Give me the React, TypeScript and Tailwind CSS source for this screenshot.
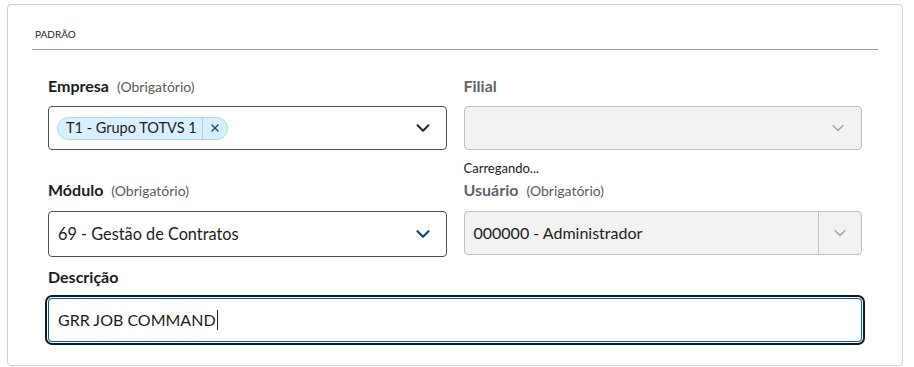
import { ChevronDown, X } from "lucide-react";

const font = { fontFamily: "Lato, 'Noto Sans', sans-serif" };

function Label({
  text,
  required,
  disabled,
}: {
  text: string;
  required?: boolean;
  disabled?: boolean;
}) {
  return (
    <div className="flex h-[20px] items-center gap-[8px]">
      <span
        className={`text-[16px] font-bold ${disabled ? "text-[#5f646a]" : "text-[#1c1c1c]"}`}
      >
        {text}
      </span>
      {required && (
        <span className="pt-[1px] text-[14px] text-[#5c5c5c]">(Obrigatório)</span>
      )}
    </div>
  );
}

export default function App() {
  return (
    <div className="min-h-[367px] bg-white pl-[7px] pt-[4px]" style={font}>
      <div className="h-[362px] w-[896px] rounded-[4px] border border-[#d0d0d0] px-[24px]">
        <div className="flex h-[45px] items-end border-b border-[#9c9c9c] pb-[7px] pl-[3px]">
          <span className="text-[10px] uppercase text-[#1c1c1c]">Padrão</span>
        </div>

        <div className="px-[16px] pt-[26px]">
          <div className="grid grid-cols-2 gap-x-[17px]">
            <div className="flex flex-col">
              <Label text="Empresa" required />
              <div className="mt-[10px] flex h-[44px] items-center rounded-[4px] border border-[#4a4f53] pl-[8px] pr-[12px]">
                <span className="flex h-[23px] items-center rounded-full border border-[#a8d5f3] bg-[#d8effc] text-[14.5px] text-[#1c1c1c]">
                  <span className="pl-[8px] pr-[5px]">T1 - Grupo TOTVS 1</span>
                  <span className="flex h-full items-center border-l border-[#a8d5f3] px-[6px] text-[#0c4f7a]">
                    <X size={12} strokeWidth={2.5} />
                  </span>
                </span>
                <ChevronDown
                  className="ml-auto text-[#1d2a33]"
                  size={22}
                  strokeWidth={2.2}
                />
              </div>

              <div className="mt-[30px]">
                <Label text="Módulo" required />
              </div>
              <div className="mt-[11px] flex h-[46px] items-center rounded-[4px] border border-[#4a4f53] pl-[9px] pr-[12px]">
                <span className="text-[16.3px] text-[#1c1c1c]">
                  69 - Gestão de Contratos
                </span>
                <ChevronDown
                  className="ml-auto text-[#0c4a6e]"
                  size={22}
                  strokeWidth={2.4}
                />
              </div>
            </div>

            <div className="flex flex-col">
              <Label text="Filial" disabled />
              <div className="mt-[10px] flex h-[44px] items-center justify-end rounded-[4px] border border-[#c2c2c2] bg-[#f2f2f2] pr-[13px]">
                <ChevronDown className="text-[#a3a3a3]" size={20} strokeWidth={1.6} />
              </div>
              <div className="mt-[10px] h-[16px] text-[13px] leading-[16px] text-[#1c1c1c]">
                Carregando...
              </div>
              <div className="mt-[4px]">
                <Label text="Usuário" required disabled />
              </div>
              <div className="mt-[11px] flex h-[44px] items-center rounded-[4px] border border-[#c2c2c2] bg-[#f2f2f2]">
                <span className="pl-[9px] text-[16px] text-[#1c1c1c]">
                  000000 - Administrador
                </span>
                <span className="ml-auto flex h-full w-[43px] items-center justify-center border-l border-[#c2c2c2]">
                  <ChevronDown
                    className="text-[#a3a3a3]"
                    size={20}
                    strokeWidth={1.6}
                  />
                </span>
              </div>
            </div>
          </div>

          <div className="mt-[10px]">
            <Label text="Descrição" />
          </div>
          <div className="mt-[11px] flex h-[44px] items-center rounded-[4px] border border-[#0c5a8c] pl-[9px] shadow-[0_0_0_1px_#ffffff,0_0_0_3px_#0b1d2c]">
            <span className="text-[16px] text-[#1c1c1c]">GRR JOB COMMAND</span>
            <span className="ml-[1px] h-[20px] w-[1px] bg-[#1c1c1c]" />
          </div>
        </div>
      </div>
    </div>
  );
}
